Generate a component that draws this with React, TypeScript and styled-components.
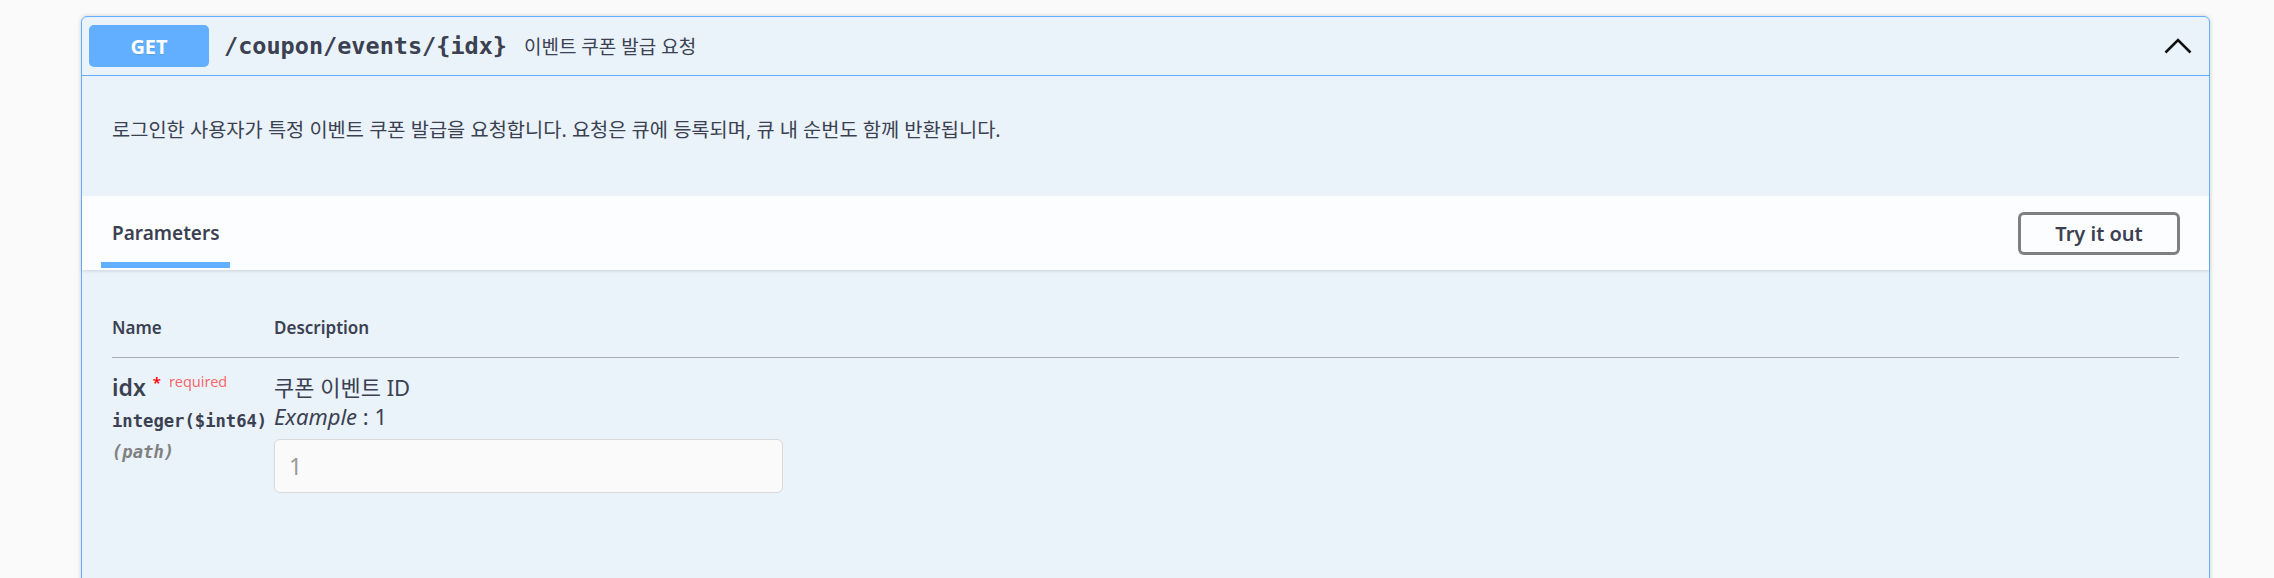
import React from "react";
import styled, { createGlobalStyle } from "styled-components";

const GlobalStyle = createGlobalStyle`
  html, body { margin: 0; padding: 0; background: #fafafa; }
  body { font-family: "Noto Sans", "Noto Sans CJK KR", sans-serif; color: #3b4151; }
  * { box-sizing: border-box; }
`;

const Page = styled.div`
  padding: 16px 64px 0 81px;
  width: 2274px;
`;

const Card = styled.section`
  border: 1px solid #61affe;
  border-radius: 6px;
  background: rgba(97, 175, 254, 0.1);
  box-shadow: 0 0 4px rgba(0, 0, 0, 0.19);
  min-height: 620px;
`;

const Summary = styled.div`
  display: flex;
  align-items: center;
  height: 59px;
  padding: 0 17px 0 7px;
  border-bottom: 1px solid #61affe;
`;

const Method = styled.span`
  display: inline-flex;
  align-items: center;
  justify-content: center;
  width: 120px;
  height: 42px;
  border-radius: 5px;
  background: #61affe;
  color: #fff;
  font-family: "Noto Sans", sans-serif;
  font-size: 20px;
  font-weight: 700;
  text-shadow: 0 1px 0 rgba(0, 0, 0, 0.1);
`;

const Path = styled.span`
  margin-left: 15px;
  font-family: "DejaVu Sans Mono", monospace;
  font-weight: 700;
  font-size: 23.5px;
  color: #3b4151;
`;

const SummaryDesc = styled.span`
  margin-left: 17px;
  font-family: "Noto Sans", "Noto Sans CJK KR", sans-serif;
  font-size: 19px;
  color: #3b4151;
`;

const Arrow = styled.svg`
  margin-left: auto;
  width: 28px;
  height: 16px;
`;

const Description = styled.div`
  padding: 39px 30px 52px;
  font-size: 19.8px;
  line-height: 29px;
`;

const SectionHeader = styled.div`
  display: flex;
  align-items: center;
  justify-content: space-between;
  height: 74px;
  padding: 0 29px 0 30px;
  background: rgba(255, 255, 255, 0.8);
  box-shadow: 0 1.5px 3px rgba(0, 0, 0, 0.1);
`;

const TabTitle = styled.span`
  position: relative;
  font-size: 19px;
  font-weight: 600;
  line-height: 29px;
  &::after {
    content: "";
    position: absolute;
    left: -10%;
    width: 120%;
    bottom: -20.5px;
    height: 6px;
    background: #61affe;
  }
`;

const TryButton = styled.button`
  width: 162px;
  height: 43px;
  border: 3px solid #808080;
  border-radius: 6px;
  background: transparent;
  font-family: "Noto Sans", sans-serif;
  font-size: 20px;
  font-weight: 600;
  color: #3b4151;
  padding: 0;
`;

const TableWrap = styled.div`
  padding: 0 30px 0 30px;
`;

const HeaderRow = styled.div`
  display: grid;
  grid-template-columns: 162px 1fr;
  padding: 45px 0 17px;
  border-bottom: 1px solid #a9aeb8;
`;

const Th = styled.div`
  font-size: 17px;
  font-weight: 600;
  line-height: 25px;
`;

const Row = styled.div`
  display: grid;
  grid-template-columns: 162px 1fr;
  padding-top: 15px;
`;

const NameCol = styled.div`
  display: flex;
  flex-direction: column;
`;

const ParamName = styled.div`
  font-size: 23px;
  font-weight: 600;
  line-height: 29px;
`;

const Star = styled.span`
  position: relative;
  top: -8px;
  margin-left: 7px;
  font-size: 15px;
  color: #ff0000;
`;

const Required = styled.span`
  position: relative;
  top: -9px;
  margin-left: 8px;
  font-size: 14.5px;
  font-weight: 400;
  color: rgba(255, 0, 0, 0.6);
`;

const ParamType = styled.div`
  margin-top: 4px;
  font-family: "DejaVu Sans Mono", monospace;
  font-size: 17.2px;
  font-weight: 700;
  line-height: 25px;
  white-space: nowrap;
`;

const ParamIn = styled.div`
  margin-top: 6px;
  font-family: "DejaVu Sans Mono", monospace;
  font-size: 17.2px;
  font-style: italic;
  font-weight: 600;
  line-height: 25px;
  color: #808080;
`;

const DescCol = styled.div`
  display: flex;
  flex-direction: column;
  align-items: flex-start;
`;

const DescLine = styled.div`
  font-size: 22px;
  line-height: 29px;
`;

const Input = styled.input`
  margin-top: 8px;
  width: 509px;
  height: 54px;
  padding: 0 14px;
  border: 1.5px solid #d9d9d9;
  border-radius: 6px;
  background: #fafafa;
  font-family: "Noto Sans", sans-serif;
  font-size: 23px;
  color: #3b4151;
  outline: none;
  &::placeholder { color: #9a9a9a; }
`;

export default function App() {
  return (
    <>
      <GlobalStyle />
      <Page>
        <Card>
          <Summary>
            <Method>GET</Method>
            <Path>/coupon/events/{"{idx}"}</Path>
            <SummaryDesc>이벤트 쿠폰 발급 요청</SummaryDesc>
            <Arrow viewBox="0 0 28 16" fill="none">
              <polyline points="1.5,14.5 14,2 26.5,14.5" stroke="#111" strokeWidth="2.6" strokeLinecap="butt" strokeLinejoin="miter" />
            </Arrow>
          </Summary>
          <Description>
            로그인한 사용자가 특정 이벤트 쿠폰 발급을 요청합니다. 요청은 큐에 등록되며, 큐 내 순번도 함께 반환됩니다.
          </Description>
          <SectionHeader>
            <TabTitle>Parameters</TabTitle>
            <TryButton>Try it out</TryButton>
          </SectionHeader>
          <TableWrap>
            <HeaderRow>
              <Th>Name</Th>
              <Th>Description</Th>
            </HeaderRow>
            <Row>
              <NameCol>
                <ParamName>
                  idx<Star>*</Star>
                  <Required>required</Required>
                </ParamName>
                <ParamType>integer($int64)</ParamType>
                <ParamIn>(path)</ParamIn>
              </NameCol>
              <DescCol>
                <DescLine>쿠폰 이벤트 ID</DescLine>
                <DescLine>
                  <i>Example</i> : 1
                </DescLine>
                <Input type="text" placeholder="1" />
              </DescCol>
            </Row>
          </TableWrap>
        </Card>
      </Page>
    </>
  );
}
